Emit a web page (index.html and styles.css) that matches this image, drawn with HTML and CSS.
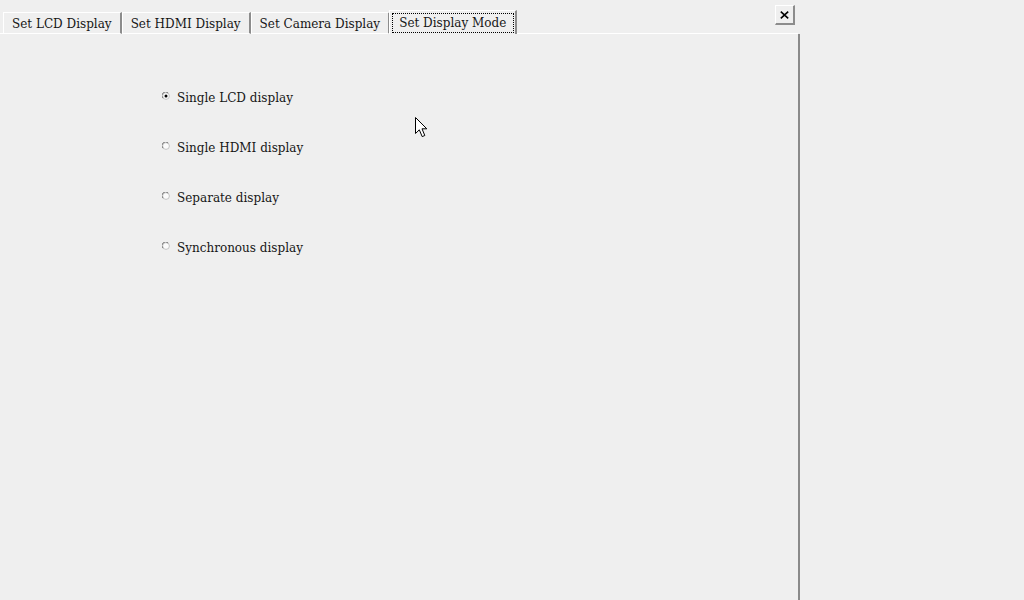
FILE: index.html
```html
<!DOCTYPE html>
<html>
<head>
<meta charset="utf-8">
<title>Display Settings</title>
<link rel="stylesheet" href="styles.css">
</head>
<body>
<div class="window">
  <div class="tabrow">
    <div class="edge"></div>
    <div class="tab">Set LCD Display</div>
    <div class="tab">Set HDMI Display</div>
    <div class="tab">Set Camera Display</div>
    <div class="tab active"><span class="focus">Set Display Mode</span></div>
    <div class="filler">
      <button class="close" type="button" aria-label="Close">
        <svg width="9" height="8" viewBox="0 0 9 8"><path d="M0.8 0.6 L8.2 7.4 M8.2 0.6 L0.8 7.4" stroke="#000" stroke-width="1.6" fill="none"/></svg>
      </button>
    </div>
  </div>
  <div class="pane">
    <div class="radios">
      <label class="radio">
        <svg class="dot" width="8" height="8" viewBox="0 0 8 8"><circle cx="4" cy="4" r="3.4" fill="#fbfbfb" stroke="#c4c4c4" stroke-width="1"/><path d="M1 6.2 A3.4 3.4 0 0 1 6.2 1" stroke="#7a7a7a" stroke-width="1" fill="none"/><circle cx="4" cy="4" r="1.5" fill="#000"/></svg>
        <span>Single LCD display</span>
      </label>
      <label class="radio">
        <svg class="dot" width="8" height="8" viewBox="0 0 8 8"><circle cx="4" cy="4" r="3.4" fill="#fbfbfb" stroke="#c4c4c4" stroke-width="1"/><path d="M1 6.2 A3.4 3.4 0 0 1 6.2 1" stroke="#7a7a7a" stroke-width="1" fill="none"/></svg>
        <span>Single HDMI display</span>
      </label>
      <label class="radio">
        <svg class="dot" width="8" height="8" viewBox="0 0 8 8"><circle cx="4" cy="4" r="3.4" fill="#fbfbfb" stroke="#c4c4c4" stroke-width="1"/><path d="M1 6.2 A3.4 3.4 0 0 1 6.2 1" stroke="#7a7a7a" stroke-width="1" fill="none"/></svg>
        <span>Separate display</span>
      </label>
      <label class="radio">
        <svg class="dot" width="8" height="8" viewBox="0 0 8 8"><circle cx="4" cy="4" r="3.4" fill="#fbfbfb" stroke="#c4c4c4" stroke-width="1"/><path d="M1 6.2 A3.4 3.4 0 0 1 6.2 1" stroke="#7a7a7a" stroke-width="1" fill="none"/></svg>
        <span>Synchronous display</span>
      </label>
    </div>
  </div>
</div>
<svg class="cursor" width="14" height="22" viewBox="0 0 14 22"><path d="M0.5 0.5 V16.5 L4.3 12.8 L7.2 19.6 L9.8 18.5 L7 11.8 H11.8 Z" fill="#fff" stroke="#000" stroke-width="1" stroke-linejoin="miter"/></svg>
</body>
</html>
```

FILE: styles.css
```css
html, body {
  margin: 0;
  padding: 0;
  background: #efefef;
  overflow: hidden;
}

body {
  width: 1024px;
  height: 600px;
  font-family: "DejaVu Serif", "Liberation Serif", serif;
  font-size: 12px;
  color: #161616;
  position: relative;
}

.window {
  width: 800px;
}

.tabrow {
  display: flex;
  align-items: flex-end;
  height: 34px;
  width: 798px;
}

.edge {
  width: 3px;
  height: 0;
  border-bottom: 1px solid #ffffff;
}

.tab {
  height: 17px;
  line-height: 17px;
  padding: 3px 8px 0 8px;
  border-top: 1px solid #ffffff;
  border-left: 1px solid #ffffff;
  border-right: 2px solid #8c8c8c;
  border-bottom: 1px solid #ffffff;
  white-space: nowrap;
}

.tab.active {
  position: relative;
  z-index: 1;
  margin-left: -1px;
  height: auto;
  padding: 2px 1px 1px 2px;
  border-bottom: none;
  background: #efefef;
}

.focus {
  display: block;
  height: 17px;
  line-height: 17px;
  padding: 1px 7px 0 6px;
  border: 1px dotted #000000;
}

.filler {
  flex: 1;
  align-self: stretch;
  display: flex;
  justify-content: flex-end;
  align-items: flex-start;
  padding-top: 5px;
  padding-right: 3px;
  border-bottom: 1px solid #ffffff;
}

.close {
  width: 20px;
  height: 20px;
  margin: 0;
  padding: 0;
  display: flex;
  align-items: center;
  justify-content: center;
  background: #efefef;
  border-top: 1px solid #ffffff;
  border-left: 1px solid #ffffff;
  border-right: 2px solid #8c8c8c;
  border-bottom: 2px solid #8c8c8c;
}

.pane {
  height: 566px;
  width: 800px;
  border-right: 2px solid #8a8a8a;
  padding: 54px 0 0 162px;
  box-sizing: border-box;
}

.radios {
  display: flex;
  flex-direction: column;
  gap: 30px;
}

.radio {
  display: flex;
  align-items: center;
  height: 20px;
  line-height: 20px;
  gap: 7px;
}

.dot {
  display: block;
  margin-top: -4px;
}

.cursor {
  position: absolute;
  left: 415px;
  top: 117px;
}
```
